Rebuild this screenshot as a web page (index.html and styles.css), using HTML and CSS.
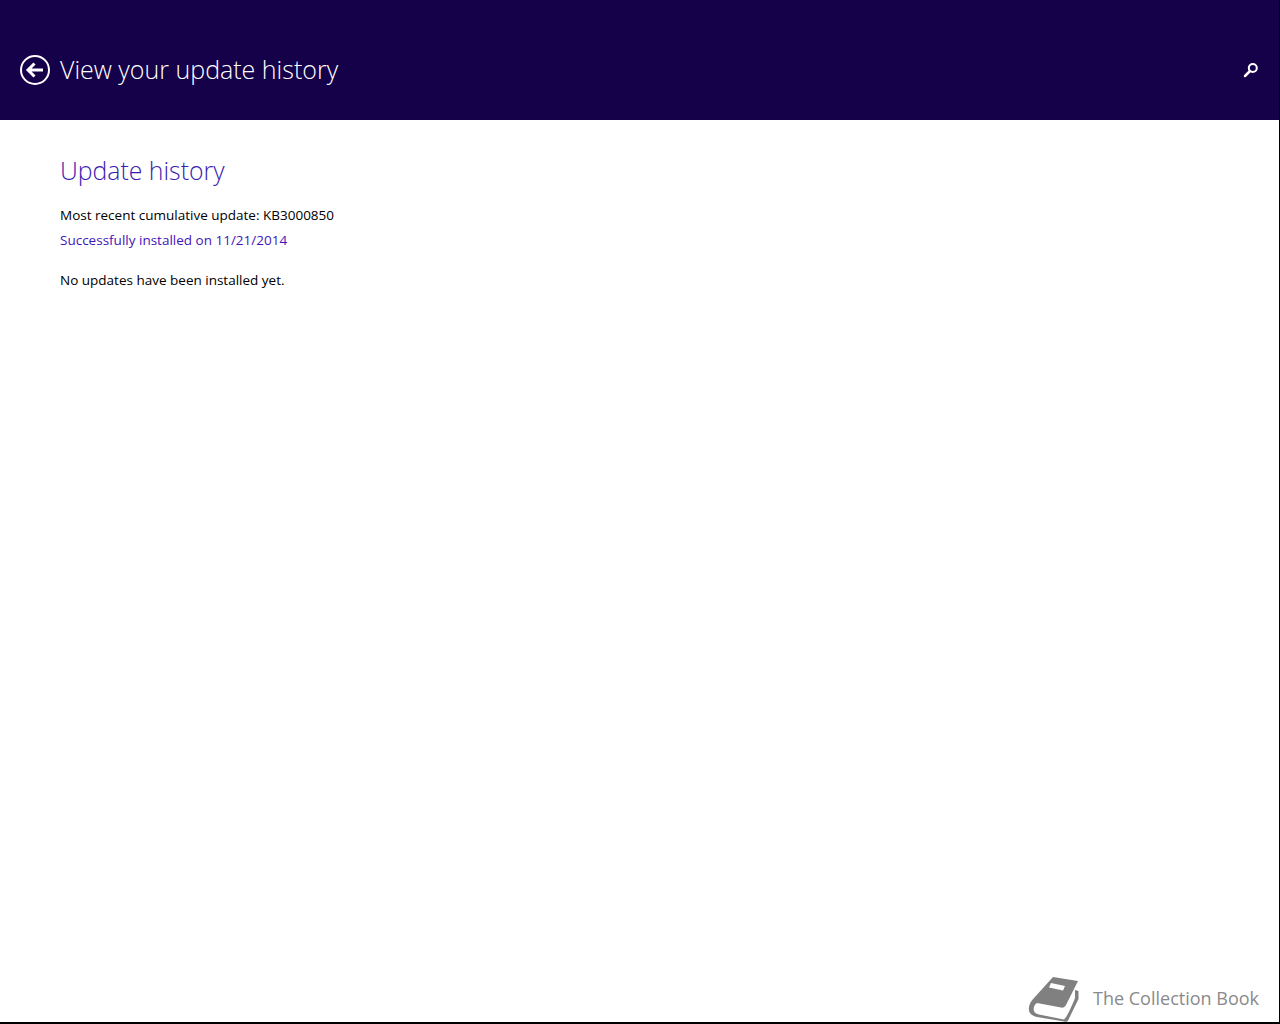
FILE: index.html
```html
<!DOCTYPE html>
<html lang="en">
  <head>
    <meta charset="UTF-8" />
    <meta name="viewport" content="width=device-width, initial-scale=1.0" />
    <title>View your update history</title>
    <link rel="stylesheet" href="styles.css">
  </head>

  <body>
    <div class="page">
      <header class="top-bar">
        <div class="title-group">
          <svg class="back-icon" width="30" height="30" viewBox="0 0 30 30">
            <circle cx="15" cy="15" r="14" fill="none" stroke="#fff" stroke-width="2" />
            <path d="M8 15H23M14.500 8.500L8 15L14.500 21.500" fill="none" stroke="#fff" stroke-width="3" />
          </svg>
          <h1>View your update history</h1>
        </div>
        <svg class="search-icon" width="16" height="16" viewBox="0 0 16 16">
          <circle cx="9.800" cy="6" r="4" fill="none" stroke="#fff" stroke-width="2" />
          <path d="M7 9L2 14" fill="none" stroke="#fff" stroke-width="2.500" stroke-linecap="round" />
        </svg>
      </header>

      <main class="content">
        <h2>Update history</h2>
        <p class="recent">Most recent cumulative update: KB3000850</p>
        <p class="status">Successfully installed on 11/21/2014</p>
        <p class="empty">No updates have been installed yet.</p>
      </main>

      <!-- watermark -->
      <div class="watermark">
        <svg class="book-icon" width="52" height="46" viewBox="0 0 52 46">
          <path d="M25 1L50 5L38 29C37 31 35 32 33 31.500L9 27C6.500 28.500 5 32 6 35C7 37.500 9 38 11 38.500L36 43.500C39 41 43 32 47 22L47 14L50.500 15L50.500 23L40 44.500C39 46 38 46 36 45.500L9 41C3 40 0 36 1 31C1.500 28 3 25 6 22Z" fill="#808080" />
          <path d="M23 7L37 10L35 14.500L21 11.500Z" fill="#fff" />
        </svg>
        <span class="watermark-text">The Collection Book</span>
      </div>
    </div>
  </body>
</html>
```

FILE: styles.css
```css
html,
body {
  margin: 0;
  height: 100%;
}

body {
  font-family: "Open Sans", "Noto Sans", Arial, sans-serif;
  background-color: #ffffff;
  color: #000;
}

.page {
  height: 1024px;
  box-sizing: border-box;
  display: flex;
  flex-direction: column;
  border-right: 1px solid #000;
  border-bottom: 2px solid #000;
  overflow: hidden;
}

.top-bar {
  height: 120px;
  flex-shrink: 0;
  box-sizing: border-box;
  padding: 55px 20px 0 20px;
  background-color: #15004a;
  color: #fff;
  display: flex;
  justify-content: space-between;
  align-items: flex-start;
}

.title-group {
  display: flex;
  align-items: center;
  gap: 10px;
}

.title-group h1 {
  margin: 0 0 2px;
  font-size: 25px;
  font-weight: 300;
  line-height: 28px;
}

.search-icon {
  margin-top: 7px;
}

.content {
  flex: 1;
  padding: 33px 60px 0;
}

.content h2 {
  margin: 0 0 16px;
  font-size: 24.800px;
  font-weight: 300;
  line-height: 34px;
  color: #3a1db0;
}

.content p {
  margin: 0;
  font-size: 13.500px;
  line-height: 25px;
}

.content .status {
  color: #3f14b8;
}

.content .empty {
  margin-top: 15px;
}

.watermark {
  display: flex;
  align-items: center;
  gap: 13px;
  align-self: flex-end;
  padding: 0 20px 0 0;
  height: 46px;
  color: #8a8a8a;
  font-size: 18px;
}

.watermark-text {
  padding-bottom: 2px;
}
```
